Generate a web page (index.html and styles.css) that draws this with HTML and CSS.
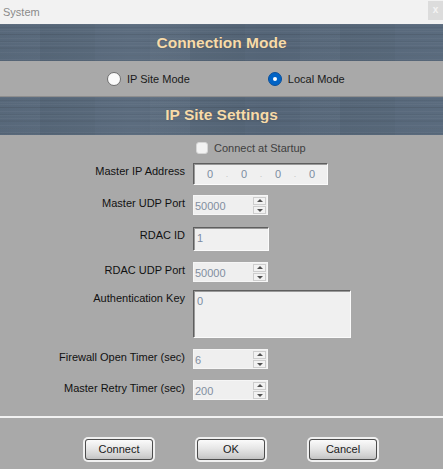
FILE: index.html
```html
<!DOCTYPE html>
<html>
<head>
<meta charset="utf-8">
<title>System</title>
<link rel="stylesheet" href="styles.css">
</head>
<body>
<div class="window">
  <div class="titlebar">
    <span class="title">System</span>
    <span class="close">x</span>
  </div>

  <div class="band"><h2>Connection Mode</h2></div>

  <div class="modes">
    <label class="radio"><span class="dot"></span>IP Site Mode</label>
    <label class="radio"><span class="dot on"></span>Local Mode</label>
  </div>

  <div class="band band2"><h2>IP Site Settings</h2></div>

  <div class="content">
    <div class="check-row">
      <span class="check"></span><span class="check-label">Connect at Startup</span>
    </div>

    <div class="form">
      <div class="lbl">Master IP Address</div>
      <div class="ipbox">
        <span class="oct">0</span><span class="sep">.</span>
        <span class="oct">0</span><span class="sep">.</span>
        <span class="oct">0</span><span class="sep">.</span>
        <span class="oct">0</span>
      </div>

      <div class="lbl">Master UDP Port</div>
      <div class="spin"><span class="val">50000</span><span class="arrows"><span class="up"></span><span class="down"></span></span></div>

      <div class="lbl">RDAC ID</div>
      <div class="textbox">1</div>

      <div class="lbl">RDAC UDP Port</div>
      <div class="spin"><span class="val">50000</span><span class="arrows"><span class="up"></span><span class="down"></span></span></div>

      <div class="lbl">Authentication Key</div>
      <div class="textbox area">0</div>

      <div class="lbl">Firewall Open Timer (sec)</div>
      <div class="spin"><span class="val">6</span><span class="arrows"><span class="up"></span><span class="down"></span></span></div>

      <div class="lbl">Master Retry Timer (sec)</div>
      <div class="spin"><span class="val">200</span><span class="arrows"><span class="up"></span><span class="down"></span></span></div>
    </div>
  </div>

  <div class="footer">
    <button class="btn">Connect</button>
    <button class="btn">OK</button>
    <button class="btn">Cancel</button>
  </div>
</div>
</body>
</html>
```

FILE: styles.css
```css
* { box-sizing: border-box; }
html, body {
  margin: 0;
  padding: 0;
  width: 443px;
  height: 469px;
  overflow: hidden;
  background: #a9a9a9;
  font-family: "Liberation Sans", Arial, sans-serif;
}
.window {
  width: 443px;
  height: 469px;
  display: flex;
  flex-direction: column;
  background: #a9a9a9;
}
.titlebar {
  height: 24px;
  background: #f2f2f2;
  display: flex;
  align-items: flex-start;
  justify-content: space-between;
}
.title {
  font-size: 11px;
  color: #8a8a8a;
  padding: 6px 0 0 3px;
  line-height: 13px;
}
.close {
  width: 15px;
  height: 19px;
  margin-top: 1px;
  background: #dcdcdc;
  color: #f4f4f4;
  font-size: 10px;
  font-weight: bold;
  text-align: center;
  line-height: 17px;
}
.band {
  height: 37px;
  display: flex;
  align-items: center;
  justify-content: center;
  background-color: #57687b;
  background-image:
    repeating-linear-gradient(180deg, rgba(255,255,255,0.035) 0 1px, transparent 1px 3px, rgba(0,0,0,0.05) 3px 4px, transparent 4px 7px),
    repeating-linear-gradient(180deg, transparent 0 5px, rgba(255,255,255,0.03) 5px 6px, transparent 6px 10px, rgba(0,0,0,0.04) 10px 11px, transparent 11px 13px),
    repeating-linear-gradient(90deg, rgba(255,255,255,0.02) 0 40px, rgba(0,0,0,0.025) 40px 95px, transparent 95px 150px),
    linear-gradient(90deg, rgba(0,0,0,0.03), rgba(255,255,255,0.03) 30%, rgba(0,0,0,0.03) 60%, rgba(255,255,255,0.02));
}
.band2 { height: 38px; padding-bottom: 2px; }
.band h2 {
  margin: 0;
  font-size: 15.5px;
  font-weight: bold;
  color: #f7dbaa;
  line-height: 18px;
  text-shadow: 0 0 1px rgba(60,50,30,0.4);
}
.modes {
  height: 36px;
  display: flex;
  align-items: center;
  padding-left: 107px;
  gap: 78px;
  border-bottom: 1px solid #8e8e8e;
}
.radio {
  display: flex;
  align-items: center;
  gap: 6px;
  font-size: 11px;
  color: #1a1a1a;
}
.dot {
  width: 14px;
  height: 14px;
  border-radius: 50%;
  background: #fbfbfb;
  border: 1px solid #6e6e6e;
  position: relative;
}
.dot.on {
  background: #0063c6;
  border-color: #0a4f9a;
}
.dot.on::after {
  content: "";
  position: absolute;
  left: 4px;
  top: 4px;
  width: 4px;
  height: 4px;
  border-radius: 50%;
  background: #fff;
}
.content {
  flex: 0 0 auto;
  height: 281px;
  padding-top: 7px;
}
.check-row {
  display: flex;
  align-items: center;
  padding-left: 196px;
  height: 12px;
}
.check {
  width: 12px;
  height: 12px;
  border-radius: 3px;
  background: #f3f3f3;
  border: 1px solid #d6d6d6;
}
.check-label {
  margin-left: 6px;
  font-size: 11px;
  color: #404040;
}
.form {
  margin-top: 9px;
  display: grid;
  grid-template-columns: 185px auto;
  grid-template-rows: 32px 32px 35px 28px 59px 31px 31px;
  column-gap: 8px;
  align-items: start;
  justify-items: start;
}
.lbl {
  justify-self: end;
  font-size: 11px;
  line-height: 13px;
  padding-top: 2px;
  color: #111;
}
.ipbox {
  width: 135px;
  height: 22px;
  background: #f0f0f0;
  border: 1px solid;
  border-color: #5e5e5e #fbfbfb #fbfbfb #5e5e5e;
  box-shadow: inset 1px 1px 0 #9a9a9a;
  display: flex;
  align-items: center;
  padding-left: 6px;
  font-size: 11px;
  color: #7c8ca2;
}
.oct { width: 20px; text-align: center; }
.sep { width: 14px; text-align: center; color: #c4c4c4; font-size: 9px; }
.textbox {
  width: 76px;
  height: 24px;
  background: #f0f0f0;
  border: 1px solid;
  border-color: #5e5e5e #fbfbfb #fbfbfb #5e5e5e;
  box-shadow: inset 1px 1px 0 #9a9a9a;
  font-size: 11px;
  color: #7c8ca2;
  padding: 4px 0 0 3px;
  line-height: 13px;
}
.textbox.area {
  width: 158px;
  height: 48px;
}
.spin {
  width: 75px;
  height: 20px;
  background: #efefef;
  border: 1px solid #f6f6f6;
  display: flex;
  align-items: center;
  justify-content: space-between;
  padding: 0 1px 0 1px;
}
.val {
  font-size: 11px;
  color: #828ea0;
  padding-top: 1px;
}
.arrows {
  display: flex;
  flex-direction: column;
  gap: 1px;
  margin-right: 0;
}
.up, .down {
  width: 13px;
  height: 8px;
  border: 1px solid #cdcdcd;
  background: #f2f2f2;
  position: relative;
}
.up::after, .down::after {
  content: "";
  position: absolute;
  left: 3px;
  width: 0;
  height: 0;
  border-left: 3px solid transparent;
  border-right: 3px solid transparent;
}
.up::after { top: 1px; border-bottom: 3px solid #505050; }
.down::after { top: 2px; border-top: 3px solid #505050; }
.footer {
  border-top: 2px solid #f2f2f2;
  flex: 1;
  display: flex;
  align-items: flex-start;
  padding: 21px 0 0 85px;
  gap: 44px;
}
.btn {
  width: 68px;
  height: 21px;
  padding: 0;
  border: 1px solid #4c4c4c;
  border-radius: 3px;
  background: linear-gradient(180deg, #fbfbfb 0%, #e6e6e6 45%, #d2d2d2 80%, #c2c2c2 100%);
  box-shadow: 0 0 0 2px #f0f0f0;
  font-family: "Liberation Sans", Arial, sans-serif;
  font-size: 11px;
  color: #1a1a1a;
  line-height: 19px;
}
```
